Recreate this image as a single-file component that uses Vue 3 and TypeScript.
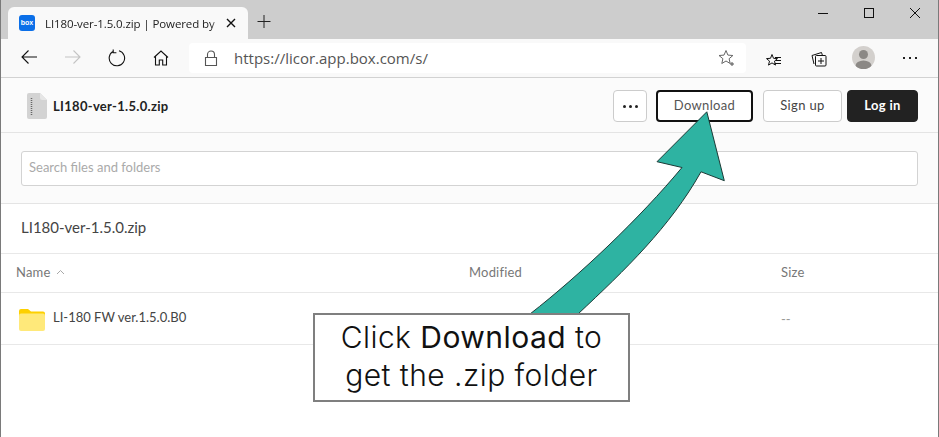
<script setup lang="ts">
const columns = ['Modified', 'Size']
</script>

<template>
  <div class="page">
    <div class="tabstrip">
      <div class="tab">
        <span class="favicon">box</span>
        <span class="tabtitle">LI180-ver-1.5.0.zip | Powered by Box</span>
        <svg class="tabclose" width="10" height="10" viewBox="0 0 10 10"><path d="M1 1l8 8M9 1l-8 8" stroke="#111" stroke-width="1.4" fill="none"/></svg>
      </div>
      <svg class="newtab" width="16" height="16" viewBox="0 0 16 16"><path d="M8 1v13M1.500 7.500h13" stroke="#222" stroke-width="1" fill="none"/></svg>
      <div class="winctrls">
        <svg width="12" height="12" viewBox="0 0 12 12"><path d="M1 6.500h10" stroke="#111" fill="none"/></svg>
        <svg width="12" height="12" viewBox="0 0 12 12"><rect x="1.500" y="1.500" width="9" height="9" stroke="#111" fill="none"/></svg>
        <svg width="12" height="12" viewBox="0 0 12 12"><path d="M1 1l10 10M11 1L1 11" stroke="#111" fill="none"/></svg>
      </div>
    </div>
    <div class="toolbar">
      <svg class="navicon" width="18" height="18" viewBox="0 0 18 18"><path d="M17 9H2M8.500 2.500L2 9l6.500 6.500" stroke="#111" stroke-width="1.100" fill="none"/></svg>
      <svg class="navicon" width="18" height="18" viewBox="0 0 18 18"><path d="M1 9h15M9.500 2.500L16 9l-6.500 6.500" stroke="#c4c4c4" stroke-width="1.100" fill="none"/></svg>
      <svg class="navicon" width="18" height="18" viewBox="0 0 18 18"><path d="M5.500 2.200A7.700 7.700 0 1 0 11 1.700M5.200 0.500v3.200h3.200" stroke="#111" stroke-width="1.100" fill="none"/></svg>
      <svg class="navicon" width="16" height="16" viewBox="0 0 16 16"><path d="M1 7.500L8 1l7 6.500M2.500 6.500V15h3.800V10h3.400v5h3.800V6.500" stroke="#111" stroke-width="1.100" fill="none"/></svg>
      <div class="addr">
        <svg class="lock" width="14" height="17" viewBox="0 0 14 17"><path d="M3.500 7V4.500a3.500 3.500 0 0 1 7 0V7M1.500 7.500h11v8h-11z" stroke="#555" stroke-width="1.100" fill="none"/></svg>
        <span class="url">https://licor.app.box.com/s/</span>
        <svg class="favadd" width="18" height="18" viewBox="0 0 18 18"><path d="M8 1.500l1.900 4.600 5 .4-3.800 3.200 1.100 4.800L8 12l-4.200 2.500 1.100-4.800L1 6.500l5-.4z" stroke="#666" fill="none"/><path d="M14 13v4M12 15h4" stroke="#555" fill="none"/></svg>
      </div>
      <svg class="tool favs" width="16" height="16" viewBox="0 0 16 16"><path d="M6 1l1.500 3.800 4 .3-3 2.500 1 4-3.500-2.200L2.500 11.600l1-4-3-2.500 4-.3z" transform="translate(0 2.500)" stroke="#111" stroke-width="1" fill="none"/><path d="M9 6.500h6M9.500 9.500h5.500M8.500 12.500h6.500" stroke="#111" fill="none"/></svg>
      <svg class="tool colls" width="16" height="16" viewBox="0 0 16 16"><path d="M3 13L1 4.500 10.500 1.500l.8 2.500" stroke="#111" fill="none"/><rect x="4.500" y="4.500" width="10.500" height="10.500" rx="1" stroke="#111" fill="none"/><path d="M10 7v6M7 10h6" stroke="#111" fill="none"/></svg>
      <svg class="avatar" width="23" height="23" viewBox="0 0 23 23"><defs><clipPath id="av"><circle cx="11.500" cy="11.500" r="11.500"/></clipPath></defs><circle cx="11.500" cy="11.500" r="11.500" fill="#d3d0cd"/><g clip-path="url(#av)"><circle cx="11.500" cy="8.500" r="4.500" fill="#8b8885"/><ellipse cx="11.500" cy="20" rx="8" ry="5.500" fill="#8b8885"/></g></svg>
      <div class="dots"><i></i><i></i><i></i></div>
    </div>

    <header class="boxhead">
      <svg class="zip" width="20" height="26" viewBox="0 0 20 26"><path d="M2 0h11l7 7v17a2 2 0 0 1-2 2H2a2 2 0 0 1-2-2V2a2 2 0 0 1 2-2z" fill="#d3d3d3"/><path d="M13 0l7 7h-5a2 2 0 0 1-2-2z" fill="#e6e6e6"/><path d="M4.500 5v17" stroke="#666" stroke-width="1.500" stroke-dasharray="1 1" fill="none"/></svg>
      <span class="filename">LI180-ver-1.5.0.zip</span>
      <button class="btn more"><i></i><i></i><i></i></button>
      <button class="btn download">Download</button>
      <button class="btn signup">Sign up</button>
      <button class="btn login">Log in</button>
    </header>

    <section class="searchbar">
      <div class="search">Search files and folders</div>
    </section>

    <div class="crumb">LI180-ver-1.5.0.zip</div>

    <div class="thead row">
      <span class="cname">Name <svg width="9" height="6" viewBox="0 0 9 6"><path d="M1 5l3.500-3.500L8 5" stroke="#a8a8a8" fill="none"/></svg></span>
      <span v-for="c in columns" :key="c" :class="c === 'Size' ? 'csize' : 'cmod'">{{ c }}</span>
    </div>

    <div class="trow row">
      <span class="cname folder">
        <svg width="26" height="22" viewBox="0 0 26 22"><path d="M2 0h7l3 2.500h12a2 2 0 0 1 2 2V9H0V2a2 2 0 0 1 2-2z" fill="#fdd000"/><rect y="4.500" width="26" height="17.500" rx="2" fill="#ffe97a"/></svg>
        <span>LI-180 FW ver.1.5.0.B0</span>
      </span>
      <span class="cmod date">Jun 23, 2020 at 12:02 PM</span>
      <span class="csize dash">--</span>
    </div>

    <svg class="arrow" width="939" height="437" viewBox="0 0 939 437">
      <path d="M530 314C580 275 640 218 682 167.500L657 161.700L706.800 111.800L724.300 180.700L701 171.800C670 227 625 270 578 314Z" fill="#2eb3a2" stroke="#1c3a36" stroke-width="1" stroke-linejoin="miter"/>
    </svg>

    <div class="callout">Click <b>Download</b> to<br>get the .zip folder</div>
  </div>
</template>

<style>
html, body { margin: 0; background: #fff; }
</style>

<style scoped>
.page { position: relative; width: 939px; height: 437px; overflow: hidden; background: #fff; font-family: "Lato", sans-serif; box-sizing: border-box; border-left: 1px solid #7a7a7a; border-right: 1px solid #7a7a7a; }
.tabstrip { height: 39px; background: #cdcdcd; display: flex; align-items: flex-end; padding-left: 7px; }
.tab { width: 240px; height: 32px; background: #f9f9f9; border-radius: 6px 6px 0 0; display: flex; align-items: center; box-sizing: border-box; padding-left: 11px; position: relative; }
.favicon { width: 16px; height: 16px; background: #0b6fe8; border-radius: 3px; color: #fff; font: 700 7px/16px "Liberation Sans", sans-serif; text-align: center; flex: none; }
.tabtitle { font: 11.5px "Open Sans", sans-serif; letter-spacing: -.1px; color: #222; margin-left: 10px; width: 174px; overflow: hidden; white-space: nowrap; -webkit-mask-image: linear-gradient(90deg, #000 167px, transparent 173px); mask-image: linear-gradient(90deg, #000 167px, transparent 173px); }
.tabclose { position: absolute; left: 218px; top: 11px; }
.newtab { margin: 0 0 9px 8px; }
.winctrls { margin-left: auto; display: flex; gap: 34px; align-self: flex-start; padding: 7px 17px 0 0; }
.toolbar { height: 38px; background: #f9f9f9; border-bottom: 1px solid #d2d2d2; display: flex; align-items: center; position: relative; }
.navicon { position: absolute; }
.navicon:nth-child(1) { left: 19px; top: 9px; }
.navicon:nth-child(2) { left: 63px; top: 9px; }
.navicon:nth-child(3) { left: 107px; top: 10px; }
.navicon:nth-child(4) { left: 152px; top: 11px; }
.addr { position: absolute; left: 188px; top: 4px; width: 557px; height: 30px; background: #fff; border-radius: 4px; display: flex; align-items: center; }
.lock { margin-left: 15px; }
.url { font: 15px "Open Sans", sans-serif; color: #555; margin-left: 16px; }
.favadd { margin-left: auto; margin-right: 10px; }
.tool { position: absolute; top: 12px; }
.favs { left: 765px; }
.colls { left: 810px; }
.avatar { position: absolute; left: 851px; top: 7px; }
.dots { position: absolute; left: 902px; top: 18px; display: flex; gap: 4px; }
.dots i { width: 2px; height: 2px; background: #222; }
.boxhead { height: 54px; background: #fbfbfb; border-bottom: 1px solid #e4e4e4; display: flex; align-items: center; padding: 0 20px 0 26px; }
.zip { flex: none; margin-top: 1px; margin-right: 1px; }
.filename { font-size: 13px; font-weight: 700; color: #222; margin-left: 5px; margin-right: auto; letter-spacing: .3px; margin-top: 2px; }
.btn { box-sizing: border-box; height: 32px; border: 1px solid #ccc; border-radius: 4px; background: #fff; font: 13px "Lato", sans-serif; color: #444; letter-spacing: .35px; padding: 0 0 2px; display: flex; align-items: center; justify-content: center; margin-top: 2px; }
.more { width: 34px; gap: 3px; padding: 0; }
.more i { width: 3px; height: 3px; border-radius: 50%; background: #222; }
.download { width: 97px; margin-left: 9px; border: 2px solid #111; color: #555; }
.signup { width: 79px; margin-left: 10px; }
.login { width: 71px; margin-left: 5px; background: #222; border-color: #222; color: #fff; font-weight: 700; }
.searchbar { height: 71px; background: #fbfbfb; border-bottom: 1px solid #e4e4e4; display: flex; align-items: center; padding: 0 20px; box-sizing: border-box; }
.search { flex: 1; height: 35px; box-sizing: border-box; border: 1px solid #d3d3d3; border-radius: 3px; background: #fff; font-size: 13px; line-height: 31px; padding-left: 7px; color: #aaa; margin-top: 0; }
.crumb { height: 49px; box-sizing: content-box; border-bottom: 1px solid #e8e8e8; font-size: 15px; line-height: 47px; color: #444; padding-left: 20px; }
.row { display: grid; grid-template-columns: 468px 312px 1fr; align-items: center; border-bottom: 1px solid #e8e8e8; }
.thead { font-size: 13px; color: #777; letter-spacing: .2px; padding-bottom: 3px; box-sizing: content-box; height: 35px; }
.cname { padding-left: 15px; }
.thead svg { margin-left: 2px; vertical-align: 2px; }
.trow { height: 51px; font-size: 13px; color: #444; }
.folder { display: flex; align-items: center; gap: 8px; padding-left: 18px; }
.folder svg { margin-top: 3px; }
.folder span { margin-top: -3px; }
.date { color: #666; margin-top: -2px; }
.dash { color: #999; }
.arrow { position: absolute; left: -1px; top: 0; pointer-events: none; }
.callout { position: absolute; left: 312px; top: 313px; width: 317px; height: 89px; box-sizing: border-box; border: 2px solid #7f7f7f; background: #fff; text-align: center; font: 300 30px/38px "Inter", sans-serif; letter-spacing: .45px; color: #111; padding-top: 3px; }
.callout b { font-weight: 400; }
</style>
